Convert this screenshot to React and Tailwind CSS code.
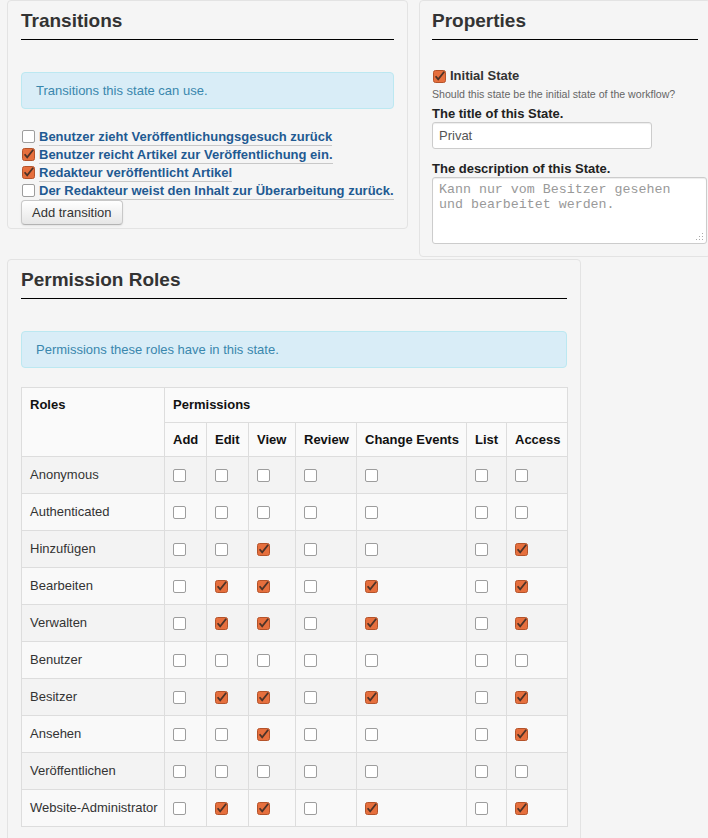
import React from 'react';

// ─── Kleine Bausteine ───────────────────────────────────────────────────────

function Box({ on }) {
  if (on) {
    return (
      <svg width="13" height="13" viewBox="0 0 13 13" className="block shrink-0">
        <rect x="0.5" y="0.5" width="12" height="12" rx="2" fill="#e66f3d" stroke="#b4532a" />
        <path d="M2.6 6.2 L5.2 9.4 L11.2 1.8" fill="none" stroke="#4d3328" strokeWidth="1.8" />
      </svg>
    );
  }
  return <span className="block w-[13px] h-[13px] rounded-[2px] border border-[#9d9d9d] bg-white shrink-0" />;
}

function PanelTitle({ children }) {
  return (
    <h3 className="text-[19px] leading-[22px] font-bold text-[#333] pt-[1px] pb-[7px] border-b border-black">
      {children}
    </h3>
  );
}

function Info({ children }) {
  return (
    <div className="mt-[32px] h-[37px] flex items-center pl-[14px] rounded-[4px] border border-[#bce8f1] bg-[#d9edf7] text-[13px] text-[#3a87ad]">
      {children}
    </div>
  );
}

// ─── Daten ──────────────────────────────────────────────────────────────────

const TRANSITIONS = [
  { label: 'Benutzer zieht Veröffentlichungsgesuch zurück', on: false },
  { label: 'Benutzer reicht Artikel zur Veröffentlichung ein.', on: true },
  { label: 'Redakteur veröffentlicht Artikel', on: true },
  { label: 'Der Redakteur weist den Inhalt zur Überarbeitung zurück.', on: false },
];

const PERMS = ['Add', 'Edit', 'View', 'Review', 'Change Events', 'List', 'Access'];
const WIDTHS = [143, 42, 42, 47, 61, 110, 40, 61];

const ROLES = [
  ['Anonymous', []],
  ['Authenticated', []],
  ['Hinzufügen', ['View', 'Access']],
  ['Bearbeiten', ['Edit', 'View', 'Change Events', 'Access']],
  ['Verwalten', ['Edit', 'View', 'Change Events', 'Access']],
  ['Benutzer', []],
  ['Besitzer', ['Edit', 'View', 'Change Events', 'Access']],
  ['Ansehen', ['View', 'Access']],
  ['Veröffentlichen', []],
  ['Website-Administrator', ['Edit', 'View', 'Change Events', 'Access']],
];

// ─── Panels ─────────────────────────────────────────────────────────────────

function Transitions() {
  return (
    <div className="ml-[7px] w-[401px] shrink-0 border border-[#e3e3e3] rounded-[4px] bg-[#f5f5f5] px-[13px] pt-[8px] pb-[3px]">
      <PanelTitle>Transitions</PanelTitle>
      <Info>Transitions this state can use.</Info>
      <div className="mt-[18px]">
        {TRANSITIONS.map((t) => (
          <div key={t.label} className="flex items-center h-[18px]">
            <span className="ml-[1px] mr-[4px]"><Box on={t.on} /></span>
            <span className="text-[13px] leading-[17px] pt-[1px] font-bold text-[#1f5a92] border-b border-[#c8c8c8]">
              {t.label}
            </span>
          </div>
        ))}
      </div>
      <button className="mt-[1px] h-[25px] px-[10px] rounded-[4px] border border-[#c8c8c8] border-b-[#b3b3b3] bg-gradient-to-b from-white to-[#e6e6e6] text-[13px] text-[#333] shadow-[inset_0_1px_0_rgba(255,255,255,0.2),0_1px_2px_rgba(0,0,0,0.08)]">
        Add transition
      </button>
    </div>
  );
}

function Properties() {
  return (
    <div className="ml-[11px] w-[292px] shrink-0 border border-[#e3e3e3] rounded-[4px] bg-[#f5f5f5] px-[12px] pt-[8px] pb-[12px]">
      <PanelTitle>Properties</PanelTitle>
      <div className="mt-[27px] h-[18px] flex items-center">
        <span className="ml-[1px] mr-[4px]"><Box on /></span>
        <span className="text-[13px] font-bold text-[#333]">Initial State</span>
      </div>
      <div className="mt-[2px] text-[10.6px] leading-[14px] text-[#666]">
        Should this state be the initial state of the workflow?
      </div>
      <div className="mt-[4px] text-[13px] leading-[17px] font-bold text-[#222]">The title of this State.</div>
      <div className="w-[220px] h-[27px] flex items-center px-[6px] bg-white border border-[#ccc] rounded-[3px] shadow-[inset_0_1px_1px_rgba(0,0,0,0.075)] text-[13px] text-[#555]">
        Privat
      </div>
      <div className="mt-[11px] text-[13px] leading-[17px] font-bold text-[#222]">The description of this State.</div>
      <div className="relative w-[275px] h-[67px] px-[6px] pt-[5px] bg-white border border-[#ccc] rounded-[3px] shadow-[inset_0_1px_1px_rgba(0,0,0,0.075)] font-['Liberation_Mono',monospace] text-[13.3px] leading-[14.5px] text-[#999]">
        Kann nur vom Besitzer gesehen
        <br />
        und bearbeitet werden.
        <svg width="8" height="8" viewBox="0 0 8 8" className="absolute right-[2px] bottom-[2px]">
          <rect x="6" y="0" width="1" height="1" fill="#aaa" />
          <rect x="6" y="3" width="1" height="1" fill="#aaa" />
          <rect x="3" y="3" width="1" height="1" fill="#aaa" />
          <rect x="6" y="6" width="1" height="1" fill="#aaa" />
          <rect x="3" y="6" width="1" height="1" fill="#aaa" />
          <rect x="0" y="6" width="1" height="1" fill="#aaa" />
        </svg>
      </div>
    </div>
  );
}

function PermissionRoles() {
  return (
    <div className="mt-[2px] ml-[7px] w-[574px] border border-[#e3e3e3] rounded-[4px] bg-[#f5f5f5] px-[13px] pt-[8px] pb-[16px]">
      <PanelTitle>Permission Roles</PanelTitle>
      <Info>Permissions these roles have in this state.</Info>
      <table className="mt-[19px] w-[546px] table-fixed border-collapse text-[13px] text-[#333]">
        <colgroup>
          {WIDTHS.map((w, i) => <col key={i} style={{ width: w }} />)}
        </colgroup>
        <thead>
          <tr className="h-[35px] bg-[#fafafa]">
            <th rowSpan={2} className="border border-[#ddd] align-top text-left px-[8px] pt-[8px] leading-[18px] font-bold text-[#111]">Roles</th>
            <th colSpan={7} className="border border-[#ddd] text-left px-[8px] font-bold text-[#111]">Permissions</th>
          </tr>
          <tr className="h-[34px] bg-[#fafafa]">
            {PERMS.map((p) => (
              <th key={p} className="border border-[#ddd] text-left px-[8px] font-bold text-[#111] whitespace-nowrap">{p}</th>
            ))}
          </tr>
        </thead>
        <tbody>
          {ROLES.map(([name, on], i) => (
            <tr key={name} className={`h-[37px] ${i % 2 === 0 ? 'bg-[#f3f3f3]' : 'bg-[#f9f9f9]'}`}>
              <td className="border border-[#ddd] px-[8px] whitespace-nowrap">{name}</td>
              {PERMS.map((p) => (
                <td key={p} className="border border-[#ddd] pl-[8px] pr-0">
                  <Box on={on.includes(p)} />
                </td>
              ))}
            </tr>
          ))}
        </tbody>
      </table>
    </div>
  );
}

// ─── Seite ──────────────────────────────────────────────────────────────────

export default function App() {
  return (
    <div className="w-[708px] h-[838px] overflow-hidden bg-[#f5f5f5] font-['Liberation_Sans',Arial,sans-serif]">
      <div className="flex items-start">
        <Transitions />
        <Properties />
      </div>
      <PermissionRoles />
    </div>
  );
}
